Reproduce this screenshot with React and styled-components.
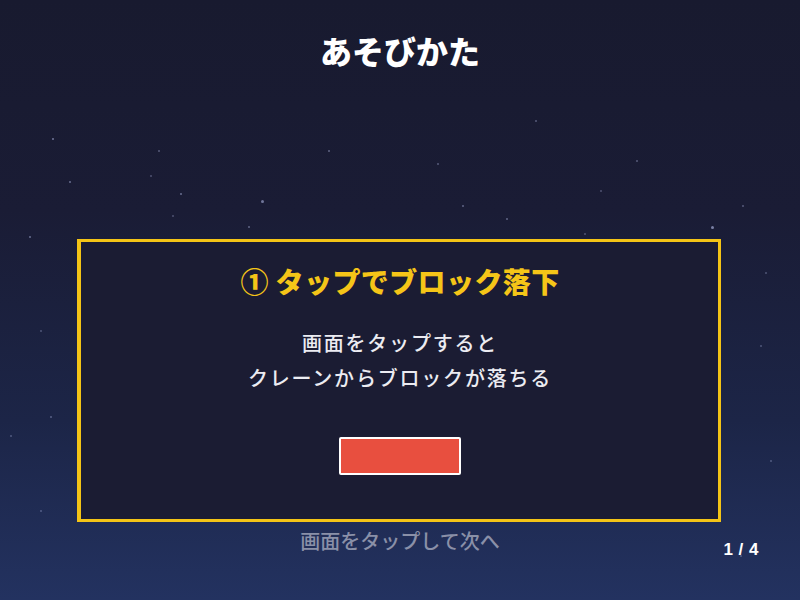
import React from "react";
import styled, { createGlobalStyle } from "styled-components";

const Global = createGlobalStyle`
  html, body { margin: 0; padding: 0; }
  body { width: 800px; height: 600px; overflow: hidden; }
`;

const FONT = `"Noto Sans CJK JP", "Noto Sans", sans-serif`;

const Screen = styled.div`
  position: relative;
  width: 800px;
  height: 600px;
  box-sizing: border-box;
  display: flex;
  flex-direction: column;
  align-items: center;
  padding-top: 30px;
  font-family: ${FONT};
  background: linear-gradient(180deg, #181a2f 0%, #1a1c35 35%, #1c2547 70%, #233260 100%);
  overflow: hidden;
`;

const Star = styled.span`
  position: absolute;
  width: ${(p) => p.$s}px;
  height: ${(p) => p.$s}px;
  border-radius: 50%;
  background: rgba(200, 210, 255, ${(p) => p.$o});
`;

const Title = styled.h1`
  margin: 0;
  font-size: 32px;
  line-height: 40px;
  font-weight: 900;
  color: #ffffff;
  position: relative;
`;

const Card = styled.section`
  position: relative;
  margin-top: 169px;
  margin-left: -3px;
  width: 644px;
  box-sizing: border-box;
  border: 3px solid #f4c416;
  border-left-width: 4px;
  background: #1b1c33;
  padding: 19px 0 44px 2px;
  display: flex;
  flex-direction: column;
  align-items: center;
`;

const CardTitle = styled.h2`
  margin: 0;
  font-size: 28px;
  line-height: 40px;
  font-weight: 900;
  color: #f5c518;
  letter-spacing: 0.4px;
`;

const CardBody = styled.p`
  margin: 24px 0 0;
  font-size: 20px;
  line-height: 35px;
  font-weight: 500;
  color: #ececf2;
  text-align: center;
  letter-spacing: 1.8px;
`;

const DemoBlock = styled.div`
  margin-top: 42px;
  width: 122px;
  height: 38px;
  box-sizing: border-box;
  border: 2px solid #ffffff;
  border-radius: 2px;
  background: #e84f3f;
`;

const Hint = styled.p`
  margin: 5px 0 0;
  font-size: 20px;
  line-height: 28px;
  font-weight: 500;
  color: #8a90a8;
  position: relative;
`;

const PageIndicator = styled.div`
  position: absolute;
  right: 41px;
  bottom: 40px;
  font-size: 17px;
  line-height: 20px;
  font-weight: 700;
  letter-spacing: 0.5px;
  color: #ffffff;
  font-family: "Liberation Sans", Arial, sans-serif;
`;

const stars = [
  [52, 138, 2, 0.5], [69, 181, 2, 0.45], [158, 150, 2, 0.35], [150, 175, 2, 0.3],
  [180, 193, 2, 0.45], [261, 200, 3, 0.5], [172, 215, 2, 0.3], [248, 226, 2, 0.4],
  [29, 236, 2, 0.45], [328, 150, 2, 0.4], [437, 163, 2, 0.35], [462, 205, 2, 0.4],
  [506, 218, 2, 0.4], [535, 120, 2, 0.35], [584, 233, 2, 0.3], [636, 160, 2, 0.35],
  [711, 226, 3, 0.55], [742, 205, 2, 0.35], [765, 272, 2, 0.3], [40, 330, 2, 0.3],
  [50, 416, 2, 0.35], [10, 435, 2, 0.3], [760, 345, 2, 0.3], [770, 460, 2, 0.3],
  [740, 555, 2, 0.3], [40, 510, 2, 0.3], [600, 190, 2, 0.3], [380, 250, 2, 0.3],
];

export default function App() {
  return (
    <>
      <Global />
      <Screen>
        {stars.map(([x, y, s, o], i) => (
          <Star key={i} $s={s} $o={o} style={{ left: x, top: y }} />
        ))}
        <Title>あそびかた</Title>
        <Card>
          <CardTitle>① タップでブロック落下</CardTitle>
          <CardBody>
            画面をタップすると
            <br />
            クレーンからブロックが落ちる
          </CardBody>
          <DemoBlock />
        </Card>
        <Hint>画面をタップして次へ</Hint>
        <PageIndicator>1 / 4</PageIndicator>
      </Screen>
    </>
  );
}
